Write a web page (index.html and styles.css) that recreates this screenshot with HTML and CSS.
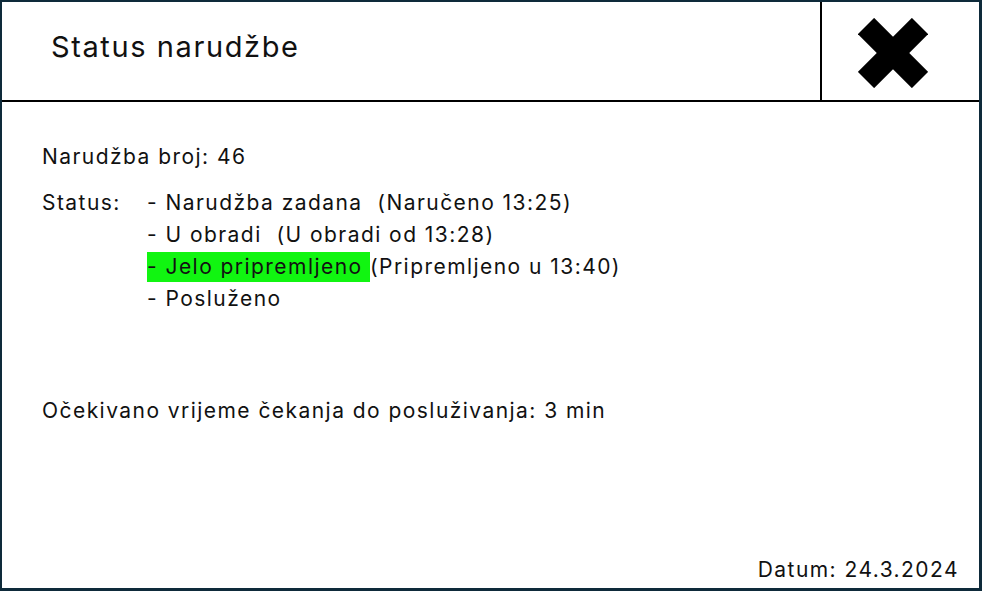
FILE: index.html
```html
<!DOCTYPE html>
<html lang="hr">
<head>
<meta charset="utf-8">
<title>Status narudžbe</title>
<link rel="stylesheet" href="styles.css">
</head>
<body>
<div class="frame">
  <header class="header">
    <h1 class="title">Status narudžbe</h1>
    <button class="close" aria-label="Zatvori">
      <svg width="70" height="70" viewBox="0 0 70 70">
        <line x1="8" y1="8" x2="62" y2="62" stroke="#000" stroke-width="23"/>
        <line x1="62" y1="8" x2="8" y2="62" stroke="#000" stroke-width="23"/>
      </svg>
    </button>
  </header>
  <main class="content">
    <p class="order">Narudžba broj: 46</p>
    <div class="status">
      <span class="status-label">Status:</span>
      <ul class="steps">
        <li>- Narudžba zadana&nbsp; (Naručeno 13:25)</li>
        <li>- U obradi&nbsp; (U obradi od 13:28)</li>
        <li><span class="current">- Jelo pripremljeno&nbsp;</span>(Pripremljeno u 13:40)</li>
        <li>- Posluženo</li>
      </ul>
    </div>
    <p class="wait">Očekivano vrijeme čekanja do posluživanja: 3 min</p>
    <p class="date">Datum: 24.3.2024</p>
  </main>
</div>
</body>
</html>
```
FILE: styles.css
```css
html, body {
  margin: 0;
  padding: 0;
  background: #ffffff;
}
body {
  font-family: "Inter", "Open Sans", sans-serif;
  color: #111;
}
.frame {
  box-sizing: border-box;
  width: 982px;
  height: 591px;
  border-style: solid;
  border-color: #0e2a3a;
  border-width: 2px 3px 3px 2px;
  display: flex;
  flex-direction: column;
}
.header {
  display: flex;
  height: 100px;
  box-sizing: border-box;
  border-bottom: 2px solid #000;
}
.title {
  flex: 1;
  margin: 0;
  padding-left: 49px;
  font-weight: 400;
  font-size: 29px;
  letter-spacing: 1.6px;
  line-height: 90px;
  color: #111;
}
.close {
  width: 159px;
  border: 0;
  border-left: 2px solid #000;
  background: #fff;
  padding: 4px 16px 0 0;
  display: flex;
  align-items: center;
  justify-content: center;
}
.content {
  flex: 1;
  display: flex;
  flex-direction: column;
  padding: 0 20px 6px 40px;
  font-size: 21px;
  letter-spacing: 1.45px;
}
.content p {
  margin: 0;
}
.order {
  line-height: 24px;
  margin-top: 43px !important;
}
.status {
  display: flex;
  margin-top: 18px;
  line-height: 32px;
}
.status-label {
  width: 105px;
}
.steps {
  list-style: none;
  margin: 0;
  padding: 0;
}
.current {
  display: inline-block;
  background: #11f511;
  line-height: 30px;
  margin: 1px 0;
}
.wait {
  margin-top: 80px !important;
  line-height: 32px;
}
.date {
  margin-top: auto !important;
  align-self: flex-end;
  margin-right: 1px;
  line-height: 24px;
}
```
